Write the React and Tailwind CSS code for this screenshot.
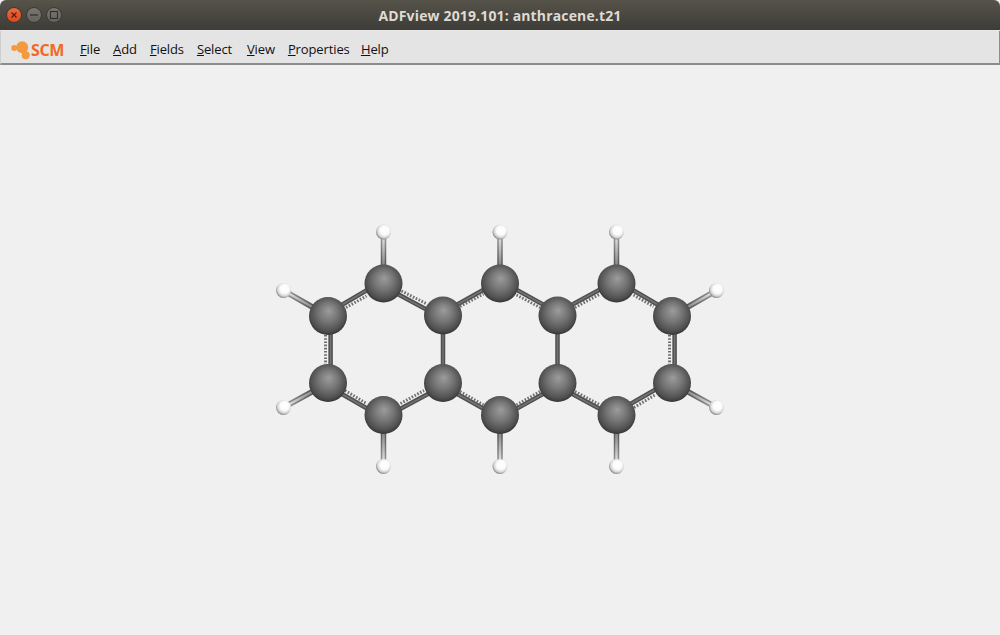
import React from 'react';

const carbons = [
  [383.5, 283.5], [500, 283.5], [616.5, 283.5],
  [328, 316], [443, 315.5], [557.5, 315.5], [672, 316],
  [328, 383], [443, 383], [557.5, 383], [672, 383],
  [383.5, 415], [500, 415], [616.5, 415],
];

const hydrogens = [
  { at: [383.5, 232], from: [383.5, 283.5] },
  { at: [500, 232], from: [500, 283.5] },
  { at: [616.5, 232], from: [616.5, 283.5] },
  { at: [283.5, 290.5], from: [328, 316] },
  { at: [716.5, 290.5], from: [672, 316] },
  { at: [283.5, 407.5], from: [328, 383] },
  { at: [716.5, 407.5], from: [672, 383] },
  { at: [383.5, 466.5], from: [383.5, 415] },
  { at: [500, 466.5], from: [500, 415] },
  { at: [616.5, 466.5], from: [616.5, 415] },
];

const bonds = [
  [3, 0], [0, 4], [4, 1], [1, 5], [5, 2], [2, 6],
  [3, 7], [4, 8], [5, 9], [6, 10],
  [7, 11], [11, 8], [8, 12], [12, 9], [9, 13], [13, 10],
];

const dashes = [
  [346, 307.5, 366.5, 296], [401.5, 291, 426, 303.5], [325.5, 335, 325.5, 364],
  [345, 390.5, 366.5, 403.5], [400.5, 403.5, 424, 390.5],
  [460, 306.5, 483.5, 294], [516.5, 295, 540, 307.5],
  [460, 391.5, 483.5, 405], [516.5, 405, 540, 391.5],
  [575, 307.5, 600, 294], [633.5, 295, 653.5, 306.5], [669.5, 335, 669.5, 364],
  [575, 391.5, 600, 405], [634, 407.5, 655, 395],
];

const menus = [
  { label: 'File', width: '' },
  { label: 'Add', width: '' },
  { label: 'Fields', width: '' },
  { label: 'Select', width: 'w-[37px]' },
  { label: 'View', width: 'w-[28px]' },
  { label: 'Properties', width: 'w-[60px]' },
  { label: 'Help', width: '' },
];

// the solid half of a double bond sits across the axis from its dashed half
function bondShift(a, b) {
  const mx = (a[0] + b[0]) / 2;
  const my = (a[1] + b[1]) / 2;
  const dash = dashes.find(
    ([x1, y1, x2, y2]) => Math.hypot((x1 + x2) / 2 - mx, (y1 + y2) / 2 - my) < 8
  );
  if (!dash) return [0, 0];
  const dx = b[0] - a[0];
  const dy = b[1] - a[1];
  const len = Math.hypot(dx, dy);
  const nx = -dy / len;
  const ny = dx / len;
  const side = ((dash[0] + dash[2]) / 2 - mx) * nx + ((dash[1] + dash[3]) / 2 - my) * ny;
  const s = side > 0 ? -2.6 : 2.6;
  return [nx * s, ny * s];
}

function Molecule() {
  return (
    <svg viewBox="0 65 1000 570" className="block w-full h-full">
      <defs>
        <radialGradient id="carbon" cx="50%" cy="46%" r="56%" fx="52%" fy="36%">
          <stop offset="0%" stopColor="#9c9c9c" />
          <stop offset="45%" stopColor="#767676" />
          <stop offset="82%" stopColor="#505050" />
          <stop offset="100%" stopColor="#303030" />
        </radialGradient>
        <radialGradient id="hydrogen" cx="56%" cy="42%" r="62%" fx="58%" fy="38%">
          <stop offset="0%" stopColor="#ffffff" />
          <stop offset="48%" stopColor="#fbfbfb" />
          <stop offset="75%" stopColor="#d4d4d4" />
          <stop offset="100%" stopColor="#707070" />
        </radialGradient>
      </defs>

      {bonds.map(([a, b]) => {
        const [sx, sy] = bondShift(carbons[a], carbons[b]);
        const p = {
          x1: carbons[a][0] + sx,
          y1: carbons[a][1] + sy,
          x2: carbons[b][0] + sx,
          y2: carbons[b][1] + sy,
        };
        return (
          <g key={`${a}-${b}`}>
            <line {...p} stroke="#4f4f4f" strokeWidth="4.5" />
            <line {...p} stroke="#747474" strokeWidth="1.5" />
          </g>
        );
      })}

      {dashes.map(([x1, y1, x2, y2]) => (
        <line key={`${x1}-${y1}`} x1={x1} y1={y1} x2={x2} y2={y2} stroke="#6e6e6e" strokeWidth="3" strokeDasharray="1.6 1.6" />
      ))}

      {hydrogens.map(({ at, from }, i) => (
        <g key={i}>
          <linearGradient id={`ch${i}`} gradientUnits="userSpaceOnUse" x1={from[0]} y1={from[1]} x2={at[0]} y2={at[1]}>
            <stop offset="35%" stopColor="#555555" />
            <stop offset="85%" stopColor="#8f8f8f" />
          </linearGradient>
          <linearGradient id={`chi${i}`} gradientUnits="userSpaceOnUse" x1={from[0]} y1={from[1]} x2={at[0]} y2={at[1]}>
            <stop offset="35%" stopColor="#8a8a8a" />
            <stop offset="85%" stopColor="#d8d8d8" />
          </linearGradient>
          <line x1={from[0]} y1={from[1]} x2={at[0]} y2={at[1]} stroke={`url(#ch${i})`} strokeWidth="5.5" />
          <line x1={from[0]} y1={from[1]} x2={at[0]} y2={at[1]} stroke={`url(#chi${i})`} strokeWidth="2.5" />
        </g>
      ))}

      {carbons.map(([x, y]) => (
        <circle key={`${x}-${y}`} cx={x} cy={y} r="19" fill="url(#carbon)" />
      ))}
      {hydrogens.map(({ at }) => (
        <circle key={`${at[0]}-${at[1]}`} cx={at[0]} cy={at[1]} r="7.5" fill="url(#hydrogen)" />
      ))}
    </svg>
  );
}

function WindowButtons() {
  return (
    <div className="flex items-center gap-[4px] pl-[6px]">
      <div className="w-[16px] h-[16px] rounded-full bg-gradient-to-b from-[#f0683a] to-[#dc4a1c] border border-[#3a3934] flex items-center justify-center">
        <svg width="8" height="8" viewBox="0 0 8 8">
          <path d="M1.5 1.5 L6.5 6.5 M6.5 1.5 L1.5 6.5" stroke="#4a2114" strokeWidth="1.2" />
        </svg>
      </div>
      <div className="w-[16px] h-[16px] rounded-full bg-gradient-to-b from-[#77766f] to-[#64635d] border border-[#3a3934] flex items-center justify-center">
        <svg width="10" height="8" viewBox="0 0 10 8">
          <path d="M1 4 H9" stroke="#2f2e2a" strokeWidth="1.2" />
        </svg>
      </div>
      <div className="w-[16px] h-[16px] rounded-full bg-gradient-to-b from-[#77766f] to-[#64635d] border border-[#3a3934] flex items-center justify-center">
        <svg width="10" height="10" viewBox="0 0 10 10">
          <rect x="1.5" y="1.5" width="7" height="7" fill="none" stroke="#2f2e2a" strokeWidth="1.1" />
        </svg>
      </div>
    </div>
  );
}

function ScmLogo() {
  return (
    <div className="flex items-center w-[58px]">
      <svg width="21" height="20" viewBox="0 0 21 20" className="shrink-0">
        <circle cx="3.2" cy="8" r="3" fill="#f49a3e" />
        <circle cx="11.2" cy="7.2" r="6" fill="#f49a3e" />
        <circle cx="14.7" cy="15.2" r="4" fill="#f49a3e" />
      </svg>
      <span className="text-[16px] font-bold leading-none text-[#f26a21] tracking-[-0.4px] ml-[-1px] font-['Open_Sans',sans-serif]">SCM</span>
    </div>
  );
}

export default function App() {
  return (
    <div className="w-[1000px] h-[635px] flex flex-col bg-[#f0f0f0] overflow-hidden font-['Open_Sans',sans-serif]">
      <div className="relative h-[31px] shrink-0 flex items-center rounded-t-[6px] bg-gradient-to-b from-[#56534a] to-[#3d3c37] border-b border-[#e8e8e8]">
        <WindowButtons />
        <div className="absolute inset-0 flex items-center justify-center text-[14px] font-bold text-[#dfdbd2] tracking-[0.15px]">
          ADFview 2019.101: anthracene.t21
        </div>
      </div>

      <div className="h-[34px] shrink-0 flex items-center pl-[10px] pt-[5px] bg-[#e4e4e4] border-x border-b-2 border-[#8c8c8c] border-l-[#cfcfcf]">
        <ScmLogo />
        <div className="flex items-center gap-[13px] ml-[11px] text-[13px] tracking-[-0.12px] text-[#111111]">
          {menus.map(({ label, width }) => (
            <span key={label} className={`inline-block ${width}`}>
              <span className="underline">{label[0]}</span>
              {label.slice(1)}
            </span>
          ))}
        </div>
      </div>

      <div className="flex-1 min-h-0">
        <Molecule />
      </div>
    </div>
  );
}
